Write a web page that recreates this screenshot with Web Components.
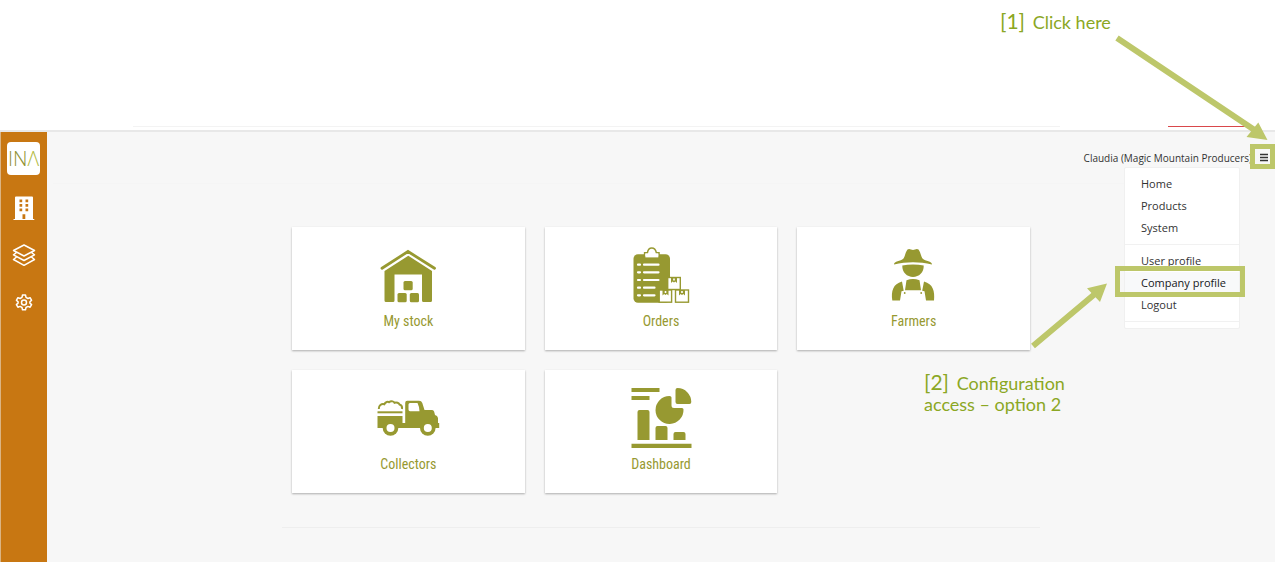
<!DOCTYPE html>
<html lang="en">
<head>
<meta charset="utf-8">
<title>INA</title>
<style>
  body { margin: 0; background: #fff; font-family: "Open Sans", "Noto Sans", sans-serif; }
</style>
</head>
<body>
<ina-page></ina-page>

<template id="t-page">
  <style>
    :host { display: flex; flex-direction: column; min-height: 100vh; position: relative; overflow: hidden; }
    .strip { height: 130px; box-sizing: border-box; display: flex; align-items: flex-end; padding: 0 42px 3px 133px; }
    .rule { flex: 1; border-top: 1px solid #f3f3f3; margin-right: 108px; }
    .tab { width: 77px; border-top: 1px solid #d9484b; }
    .app { flex: 1; display: flex; margin-right: 12px; border-top: 2px solid #e8e8e8; background: #f7f7f7; }
    main { flex: 1; display: flex; flex-direction: column; }
    .band { border: 0; border-top: 1px solid #f5f5f5; margin: 2px 36px 0 6px; }
    .grid { display: grid; grid-template-columns: repeat(3, 1fr); gap: 20px; width: 100%; max-width: 738px; margin: 43px auto 0; }
    .end { border: 0; border-top: 1px solid #eee; width: 100%; max-width: 758px; margin: 34px auto 0; }
  </style>
  <div class="strip"><span class="rule"></span><span class="tab"></span></div>
  <div class="app">
    <ina-sidebar></ina-sidebar>
    <main>
      <ina-userbar>Claudia (Magic Mountain Producers)</ina-userbar>
      <hr class="band">
      <div class="grid">
        <ina-card label="My stock">
          <svg viewBox="0 0 64 64"><path d="M6 24.300 32 7.500 58.500 24.300" fill="none" stroke="currentColor" stroke-width="2.800" stroke-linecap="round"/><path d="M32.300 11.800 56 27V56.500Q56 58 54.500 58H47.500Q46 58 46 56.500V30.500H18.500V56.500Q18.500 58 17 58H10Q8.500 58 8.500 56.500V27Z"/><rect x="27.500" y="37" width="9.200" height="9.200" rx="1.500"/><rect x="21.500" y="49" width="9.200" height="9.200" rx="1.500"/><rect x="33.800" y="49" width="9.200" height="9.200" rx="1.500"/></svg>
        </ina-card>
        <ina-card label="Orders">
          <svg viewBox="0 0 64 64"><rect x="4.500" y="10.300" width="36.500" height="48.400" rx="4.500"/><path d="M15.600 13V8.800H18.400C19 5.400 20.500 4.100 22.800 4.100S26.600 5.400 27.400 8.800H30V13Z" fill="#fff" stroke="currentColor" stroke-width="1.500"/><path d="M16.400 9.500H29.300V13.400H16.400Z" fill="#fff"/><g stroke="#fff" stroke-width="2.200" stroke-linecap="round"><path d="M9 20.700H11M15 20.700H29.500M9 28.300H11M15 28.300H29.500M9 36H11M15 36H29.500M9 43.700H11M15 43.700H25.500M9 51.300H11M15 51.300H25.500"/></g><g fill="#fff" stroke="currentColor" stroke-width="1.400"><rect x="38.700" y="33.500" width="12.600" height="12"/><rect x="30.200" y="46" width="12.400" height="12.200"/><rect x="46.500" y="46" width="13" height="12.200"/></g><path d="M42 33.500H48V39L46.300 37.500 45 38.500 43.600 37.500 42 39ZM33.500 46H39.500V51.500L37.800 50 36.500 51 35.100 50 33.500 51.500ZM50 46H56V51.500L54.300 50 53 51 51.600 50 50 51.500Z"/><path d="M44.200 34.500h1.600v2h-1.600zM35.700 47h1.600v2h-1.600zM52.200 47h1.600v2h-1.600z" fill="#fff"/></svg>
        </ina-card>
        <ina-card label="Farmers">
          <svg viewBox="0 0 64 64"><path d="M12 20.500C12 17 18.500 17.500 21.500 14.500 23 12.500 23.500 8 25.500 5.500Q27 4.600 29 5.500 31 6.300 33 5.500 35 4.600 36.500 5.500C38.500 8 39 12.500 40.500 14.500 43.500 17.500 50 17 50 20.500 37 17.500 25 17.500 12 20.500Z"/><path d="M20.300 21.500C27 20.300 35 20.300 41.700 21.500 42 28.500 37 32.900 31 32.900S20 28.500 20.300 21.500Z"/><path d="M24.500 36.200Q31 34 37.500 36.200L39 46.300H23Z"/><path d="M20 37.500 21.700 46.800 19.500 47.200 18 56.500H10.300C9 47 11 40 20 37.500ZM42 37.500C51 40 53 47 52 56.500H44L42.500 47.200 40.200 46.800Z"/><circle cx="22.700" cy="49" r=".9"/><circle cx="39.200" cy="49" r=".9"/></svg>
        </ina-card>
        <ina-card label="Collectors">
          <svg viewBox="0 0 64 64"><path d="M2.800 22C2.500 18.500 5.500 16.500 8.300 17.300 9.500 14.800 12 14.500 13 15.200 15.500 13.200 18 14.800 18.500 15.800 20.500 15 23 16 23.500 17.500 25.500 18 26.300 20 26 22" fill="none" stroke="currentColor" stroke-width="2"/><path d="M1.500 24.300H26.500V26.300H1.500Z"/><path fill-rule="evenodd" d="M1.500 29H26.500V36H29.200V15.700Q29.200 13.700 31.200 13.700H43Q45.500 13.700 46.300 16L48.500 23H56Q58 23 58.500 26L59 28Q61.500 28.500 62 31V36H63.200V41H1.500ZM34 16H41.500Q43.500 20 43.500 24.300H34Q32.500 24.300 32.500 22.500V17.500Q32.500 16 34 16Z"/><circle cx="14.500" cy="41" r="7.800"/><circle cx="51.800" cy="41" r="7.800"/><circle cx="14.500" cy="41" r="4" fill="#fff"/><circle cx="51.800" cy="41" r="4" fill="#fff"/></svg>
        </ina-card>
        <ina-card label="Dashboard">
          <svg viewBox="0 0 64 64"><path d="M2.500 1H30.500V5H2.500ZM2.500 9H20.500V13H2.500ZM2.500 56.800H62.500V61H2.500ZM8.500 53V25Q8.500 23 10.500 23H18.500Q20.500 23 20.500 25V53ZM26.500 53V41Q26.500 39 28.500 39H36.500Q38.500 39 38.500 41V53ZM44.500 53V47Q44.500 45 46.500 45H54.500Q56.500 45 56.500 47V53Z"/><path d="M42.500 10.500V18.500Q42.500 21 45 21H53Q54.500 21 54.500 22.500A14 14 0 1 1 40.500 9Q42.500 9 42.500 10.500ZM48.500 1A14 14 0 0 1 62.300 15Q62.300 17 60.500 17H48.500Q46.500 17 46.500 15V3Q46.500 1 48.500 1Z"/></svg>
        </ina-card>
      </div>
      <hr class="end">
    </main>
  </div>
  <ina-callouts></ina-callouts>
</template>

<template id="t-sidebar">
  <style>
    :host { display: block; width: 47px; background: #c87712; box-shadow: inset 1px 0 #dbb483; }
    nav { display: flex; flex-direction: column; align-items: center; gap: 23px; padding-top: 10px; }
    a { display: block; width: 24px; height: 24px; color: #fff; text-decoration: none; }
    svg { display: block; width: 24px; height: 24px; }
    .logo { width: 33px; height: 33px; margin-bottom: -2px; border-radius: 4px; background: #fff; display: flex; align-items: center; justify-content: center; font: 300 20px/33px "Open Sans", sans-serif; color: #8f9132; }
    .logo b { font-weight: 300; color: #b3bb45; }
  </style>
  <nav aria-label="Main">
    <a class="logo" href="#home"><span>IN<b>Λ</b></span></a>
    <a href="#company" aria-label="Company"><svg viewBox="0 0 24 24"><path fill="#fff" fill-rule="evenodd" d="M3 1.500Q3 .5 4 .5H20Q21 .5 21 1.500V23H22.300V24.300H1.500V23H3ZM7.500 3.500V6.300H10.200V3.500ZM13.500 3.500V6.300H16.200V3.500ZM7.500 8V10.800H10.200V8ZM13.500 8V10.800H16.200V8ZM7.500 12.500V15.300H10.200V12.500ZM13.500 12.500V15.300H16.200V12.500ZM10.500 18.300V23H13.300V18.300Z"/></svg></a>
    <a href="#products" aria-label="Products"><svg viewBox="0 0 24 24" fill="none" stroke="#fff" stroke-width="1.500" stroke-linejoin="round"><path d="M12 2 22.500 7.500 12 13 1.500 7.500ZM4.500 9.500 1.500 11.800 12 17.500 22.500 11.800 19.500 9.500M4.500 14 1.500 16.500 12 22.300 22.500 16.500 19.500 14"/></svg></a>
    <a href="#settings" aria-label="Settings"><svg viewBox="0 0 24 24" fill="none" stroke="#fff" stroke-width="1.500" stroke-linejoin="round"><path d="M10.500 5H13.500L14 7.400 15.900 8.500 18.100 7.700 19.600 10.300 17.900 11.900V13.100L19.600 14.600 18.100 17.200 15.900 16.400 14 17.500 13.500 19.800H10.500L10 17.500 8.100 16.400 5.900 17.200 4.400 14.600 6.100 13.100V11.900L4.400 10.300 5.900 7.700 8.100 8.500 10 7.400Z"/><circle cx="12" cy="12.400" r="2.500"/></svg></a>
  </nav>
</template>

<template id="t-userbar">
  <style>
    :host { display: flex; justify-content: flex-end; align-items: center; height: 49px; position: relative; font-size: 10px; line-height: 14px; color: #333; }
    .burger { margin: 0; padding: 0; width: 25px; height: 25px; box-sizing: border-box; border: 5px solid #bdc76a; background: #f7f7f7; display: flex; align-items: center; justify-content: center; z-index: 2; }
    .burger svg { display: block; width: 15px; height: 15px; }
    .name { margin-right: -2px; padding-top: 2px; }
  </style>
  <span class="name"><slot></slot></span>
  <button class="burger" type="button" aria-label="Menu"><svg viewBox="0 0 15 15" stroke="#333" stroke-width="1.500"><path d="M5 5.500H13M5 8.500H13M5 11.500H13"/></svg></button>
  <ina-menu></ina-menu>
</template>

<template id="t-menu">
  <style>
    :host { display: block; position: absolute; top: 35px; right: 35px; width: 116px; padding: 5px 0 6px; box-sizing: border-box; background: #fff; border: 1px solid #f0f0f0; border-radius: 2px; z-index: 1; }
    a { display: block; padding-left: 16px; font-size: 11px; line-height: 22px; color: #333; text-decoration: none; position: relative; }
    hr { border: 0; border-top: 1px solid #f1f1f1; margin: 5px 0; }
    hr:last-child { margin-bottom: 0; }
    .active { background: #f8f9fa; color: #16181b; }
    .active::after { content: ""; position: absolute; inset: -6px -6px -3px -10px; border: 5px solid #bdc76a; z-index: 1; }
  </style>
  <nav aria-label="User">
    <a href="#home">Home</a>
    <a href="#products">Products</a>
    <a href="#system">System</a>
    <hr>
    <a href="#user">User profile</a>
    <a class="active" href="#profile">Company profile</a>
    <a href="#logout">Logout</a>
    <hr>
  </nav>
</template>

<template id="t-card">
  <style>
    :host { display: block; }
    a { display: flex; flex-direction: column; align-items: center; padding: 17px 0 19px; background: #fff; box-shadow: 0 1px 2px rgba(0,0,0,.3); color: #979931; text-decoration: none; font: 14px/20px "Roboto Condensed", "Liberation Sans Narrow", Roboto, sans-serif; }
    ::slotted(svg) { display: block; width: 64px; height: 64px; margin-bottom: 3px; fill: currentColor; color: #979931; }
  </style>
  <a href="#open"><slot></slot><span></span></a>
</template>

<template id="t-callouts">
  <style>
    :host { display: block; position: absolute; top: 0; right: 0; width: 387px; height: 430px; pointer-events: none; z-index: 5; font: 18px/21px Lato, sans-serif; color: #8ba724; }
    svg { position: absolute; inset: 0; width: 387px; height: 430px; fill: #bdc76a; stroke: #bdc76a; }
    p { position: absolute; margin: 0; white-space: nowrap; }
    .one { left: 100px; top: 10px; }
    .two { left: 24px; top: 371px; }
    b { font-weight: 400; font-size: 21px; margin-right: 3px; }
  </style>
  <svg viewBox="0 0 387 430"><path d="M217 38 356 131M133 346 196 293" stroke-width="6" fill="none"/><path stroke="none" d="M367.500 140 346.500 137 358.300 122.500ZM207 283.500 187 288.300 200 302Z"/></svg>
  <p class="one"><b>[1]</b> Click here</p>
  <p class="two"><b>[2]</b> Configuration<br>access – option 2</p>
</template>

<script>
  const stamp = (host, id) =>
    host.attachShadow({ mode: "open" }).append(document.getElementById(id).content.cloneNode(true));

  for (const name of ["sidebar", "menu", "callouts", "userbar"]) {
    customElements.define("ina-" + name, class extends HTMLElement {
      constructor() { super(); stamp(this, "t-" + name); }
    });
  }

  customElements.define("ina-card", class extends HTMLElement {
    constructor() { super(); stamp(this, "t-card"); }
    connectedCallback() {
      this.shadowRoot.querySelector("span").textContent = this.getAttribute("label");
    }
  });

  customElements.define("ina-page", class extends HTMLElement {
    constructor() { super(); stamp(this, "t-page"); }
  });
</script>
</body>
</html>
